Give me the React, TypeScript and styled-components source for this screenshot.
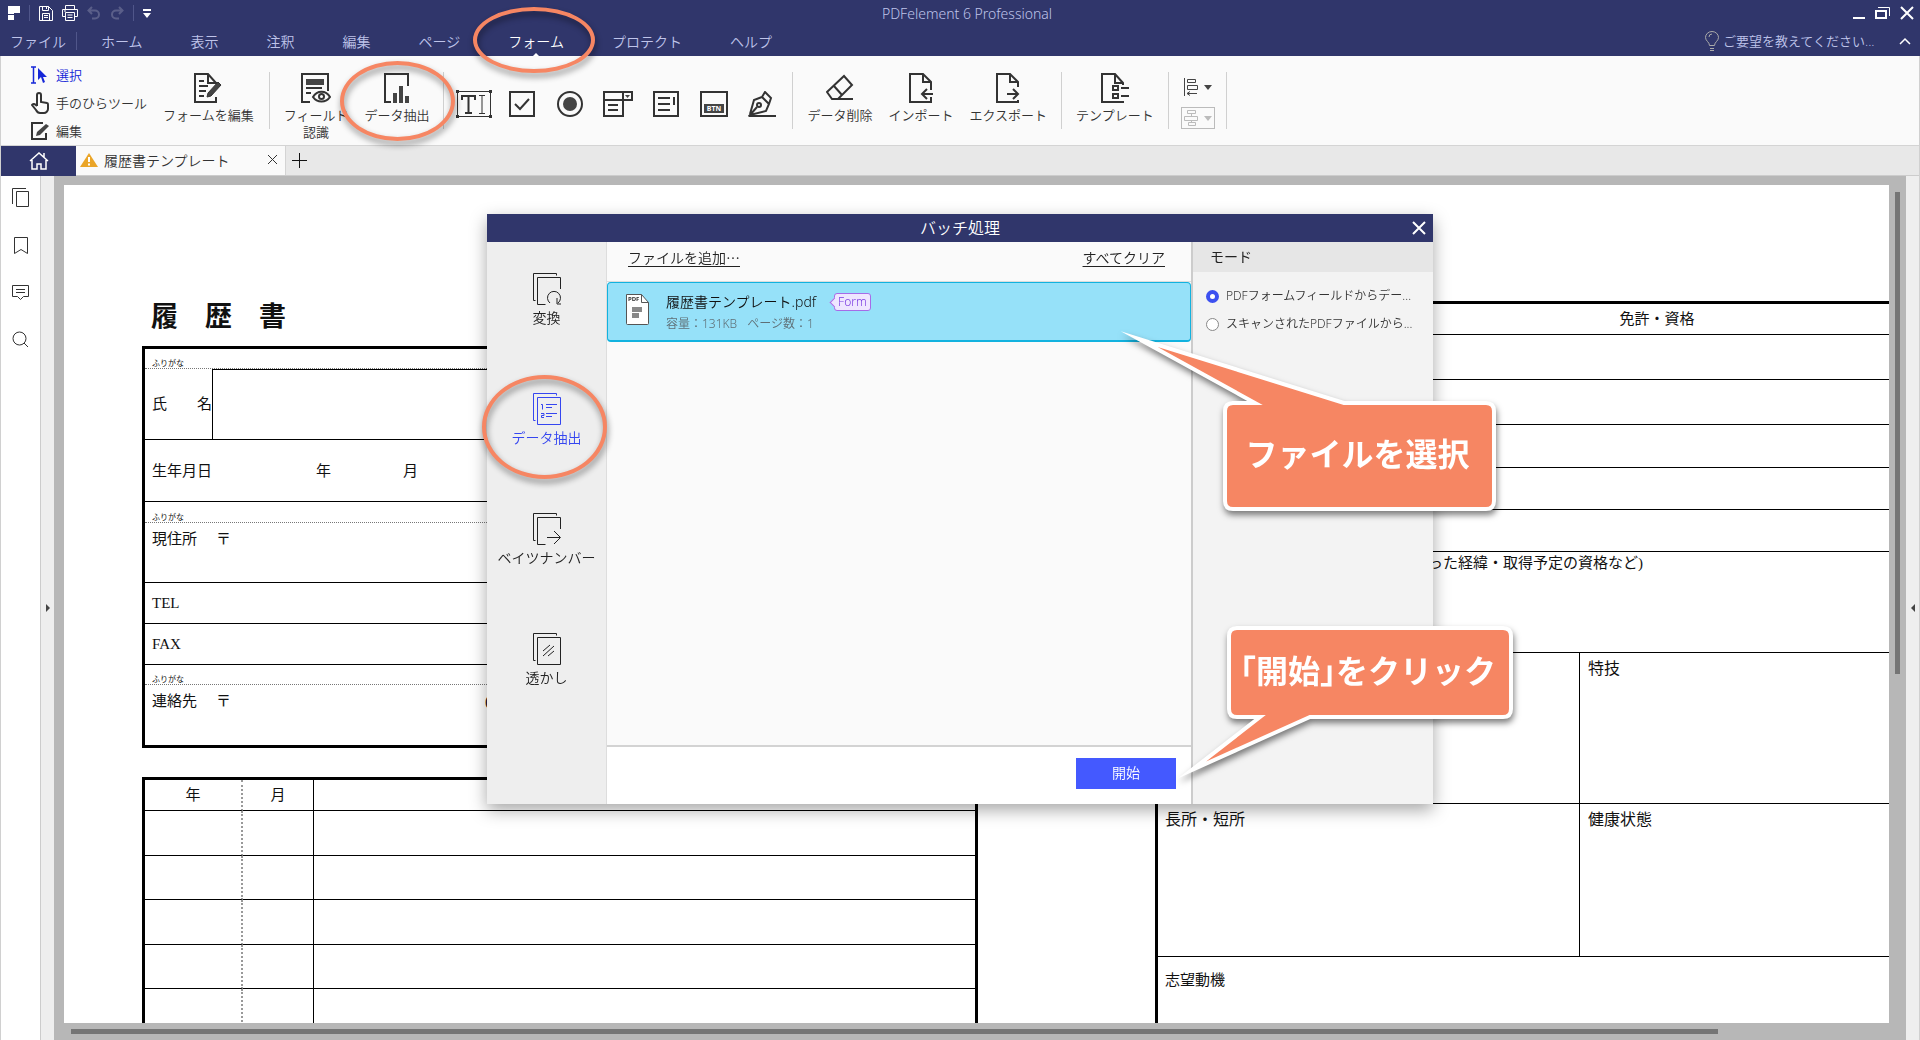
import React from "react";
import styled, { createGlobalStyle, css } from "styled-components";

const navy = "#30366b";
const orange = "#f68663";
const uiFont = `"Noto Sans", "Noto Sans CJK JP", sans-serif`;
const cjkFont = `"Noto Sans CJK JP", sans-serif`;
const paperFont = `"Liberation Serif", "Noto Sans CJK JP", serif`;

const GlobalStyle = createGlobalStyle`
  * { box-sizing: border-box; }
  body { margin: 0; font-family: ${uiFont}; font-weight: 350; color: #333; overflow: hidden; }
  button, input { font: inherit; color: inherit; background: none; border: 0; padding: 0; margin: 0; }
  button { cursor: pointer; }
  svg { display: block; flex: none; }
`;

const Window = styled.div`
  display: flex;
  flex-direction: column;
  height: 100vh;
  border: solid #d0d0d0;
  border-width: 0 1px;
`;

/* ---------- header ---------- */
const Header = styled.header`
  background: ${navy};
  color: #bfc4ea;
  margin: 0 -1px;
`;
const TitleBar = styled.div`
  display: grid;
  grid-template-columns: 1fr auto 1fr;
  align-items: center;
  height: 26px;
  padding: 0 6px 0 8px;
  font-size: 14px;
`;
const AppTitle = styled.span`
  padding-left: 12px;
`;
const QuickAccess = styled.div`
  display: flex;
  align-items: center;
  gap: 9px;
  color: #fff;
`;
const Rule = styled.span<{ $h: number }>`
  width: 1px;
  height: ${(p) => p.$h}px;
  background: #50568a;
`;
const WindowControls = styled.div`
  display: flex;
  justify-content: flex-end;
  align-items: center;
  gap: 10px;
  color: #fff;
`;
const IconButton = styled.button<{ $faded?: boolean }>`
  display: flex;
  align-items: center;
  justify-content: center;
  opacity: ${(p) => (p.$faded ? 0.2 : 1)};
`;
const MenuBar = styled.nav`
  display: flex;
  align-items: center;
  height: 30px;
  padding: 0 9px 0 10px;
  font-size: 14px;
`;
const FileItem = styled.button`
  padding-right: 10px;
`;
const MenuItem = styled.button<{ $active?: boolean }>`
  position: relative;
  height: 30px;
  padding: 0 24px;
  color: ${(p) => (p.$active ? "#fff" : "inherit")};
  ${(p) =>
    p.$active &&
    css`
      &::after {
        content: "";
        position: absolute;
        bottom: 0;
        left: 50%;
        margin-left: -3px;
        border: 3px solid transparent;
        border-top: 0;
        border-bottom-color: #fff;
      }
    `}
`;
const Feedback = styled.label`
  display: flex;
  align-items: center;
  gap: 4px;
  margin-left: auto;
  font-size: 13px;
  input {
    width: 176px;
  }
  input::placeholder {
    color: #bfc4ea;
    opacity: 1;
  }
`;

const Ring = styled.span<{ $t: number; $r: number; $b: number; $l: number }>`
  position: absolute;
  z-index: 3;
  top: ${(p) => -p.$t}px;
  right: ${(p) => -p.$r}px;
  bottom: ${(p) => -p.$b}px;
  left: ${(p) => -p.$l}px;
  border: 4px solid ${orange};
  border-radius: 50%;
  filter: drop-shadow(1px 4px 3px rgba(0, 0, 0, 0.45));
  pointer-events: none;
`;

/* ---------- ribbon ---------- */
const Ribbon = styled.div`
  display: flex;
  align-items: flex-start;
  height: 90px;
  background: #fafafa;
  border-bottom: 1px solid #d4d4d4;
  font-size: 13px;
`;
const RibbonRule = styled.span`
  width: 1px;
  height: 57px;
  margin-top: 16px;
  background: #d0d0d0;
`;
const ModeList = styled.div`
  display: flex;
  flex-direction: column;
  padding: 5px 8px 0 30px;
`;
const ModeButton = styled.button<{ $active?: boolean }>`
  display: flex;
  align-items: center;
  gap: 7px;
  height: 28px;
  line-height: 17px;
  color: ${(p) => (p.$active ? "#1526d8" : "inherit")};
`;
const Group = styled.div`
  display: flex;
  padding: 0 6px;
`;
const EditGroup = styled.div`
  padding-right: 7px;
`;
const ToolButton = styled.button`
  position: relative;
  display: flex;
  flex-direction: column;
  align-items: center;
  gap: 4px;
  padding: 17px 8px 0;
  line-height: 17px;
`;
const FieldButton = styled.button`
  display: flex;
  align-items: center;
  justify-content: center;
  width: 48px;
  padding-top: 34px;
`;
const AlignColumn = styled.div`
  display: flex;
  flex-direction: column;
  gap: 9px;
  padding: 20px 11px 0 12px;
`;
const AlignButton = styled.button<{ $framed?: boolean }>`
  display: flex;
  align-items: center;
  justify-content: space-between;
  width: 34px;
  height: 22px;
  padding: 0 2px;
  border: 1px solid ${(p) => (p.$framed ? "#bbb" : "transparent")};
  color: ${(p) => (p.$framed ? "#bbb" : "#444")};
`;

/* ---------- tabs ---------- */
const TabBar = styled.div`
  display: flex;
  height: 30px;
  background: #e8e8e8;
  border-bottom: 1px solid #ccc;
  font-size: 14px;
`;
const HomeTab = styled.button`
  display: flex;
  align-items: center;
  justify-content: center;
  width: 75px;
  height: 30px;
  background: ${navy};
`;
const DocTab = styled.div`
  display: flex;
  align-items: center;
  gap: 6px;
  width: 210px;
  padding: 0 7px 2px 4px;
  background: #fafafa;
  border-right: 1px solid #d4d4d4;
  span {
    flex: 1;
  }
`;
const AddTab = styled.button`
  padding: 0 6px;
`;

/* ---------- work area ---------- */
const Workspace = styled.div`
  display: flex;
  flex: 1;
  min-height: 0;
`;
const SideRail = styled.nav`
  display: flex;
  flex-direction: column;
  align-items: center;
  gap: 29px;
  width: 40px;
  padding-top: 12px;
  background: #fff;
  border-right: 1px solid #ccc;
`;
const Gutter = styled.div`
  display: flex;
  align-items: center;
  justify-content: center;
  width: 13px;
  background: #eee;
`;
const Canvas = styled.div`
  display: grid;
  grid-template: minmax(0, 1fr) 17px / minmax(0, 1fr) 17px;
  flex: 1;
  min-width: 0;
  padding: 9px 0 0 10px;
  background: #b7b7b7;
`;
const VTrack = styled.div`
  padding: 7px 6px 0;
`;
const VThumb = styled.div`
  width: 5px;
  height: 58%;
  background: #757575;
`;
const HTrack = styled.div`
  padding: 6px 0 0 7px;
`;
const HThumb = styled.div`
  width: 90.6%;
  height: 5px;
  background: #757575;
`;

/* ---------- résumé paper ---------- */
const Paper = styled.div`
  display: flex;
  align-items: flex-start;
  gap: 177px;
  overflow: hidden;
  padding-left: 78px;
  background: #fff;
  color: #111;
  font-family: ${paperFont};
  font-size: 15px;
  font-weight: 400;
  line-height: 18px;
`;
const LeftSheet = styled.div`
  flex: none;
  width: 836px;
  padding-top: 112px;
`;
const RightSheet = styled.div`
  flex: none;
  width: 836px;
  padding-top: 116px;
`;
const PaperTitle = styled.h1`
  margin: 0 0 9px 9px;
  font-size: 27px;
  line-height: 40px;
  font-weight: 700;
`;
const Frame = styled.div`
  border: 3px solid #000;
`;
const FormRow = styled.div<{ $h: number; $dotted?: boolean; $top?: boolean }>`
  display: flex;
  align-items: ${(p) => (p.$top ? "flex-start" : "center")};
  height: ${(p) => p.$h}px;
  padding: ${(p) => (p.$top ? "7px" : "0")} 0 0 7px;
  border-bottom: 1px ${(p) => (p.$dotted ? "dotted #777" : "solid #000")};
  &:last-child {
    border-bottom: 0;
  }
`;
const Ruby = styled.span`
  align-self: flex-end;
  font-size: 8px;
  line-height: 9px;
`;
const NameLabel = styled.span`
  display: flex;
  justify-content: space-between;
  width: 60px;
`;
const NameBox = styled.span`
  flex: 1;
  align-self: stretch;
  border: solid #000;
  border-width: 1px 0 0 1px;
`;
const Slot = styled.span<{ $w: number }>`
  width: ${(p) => p.$w}px;
`;
const HistoryTable = styled.table`
  width: 100%;
  margin-top: 29px;
  border-collapse: separate;
  border-spacing: 0;
  border: 3px solid #000;
  table-layout: fixed;
  th,
  td {
    height: 44px;
    padding: 0;
    font-weight: 400;
    border-bottom: 1px solid #000;
  }
  tr:nth-child(odd) td {
    height: 45px;
  }
  th {
    height: 31px;
  }
  th:first-child,
  td:first-child {
    width: 98px;
    border-right: 2px dotted #999;
  }
  th:nth-child(2),
  td:nth-child(2) {
    width: 71px;
    border-right: 1px solid #000;
  }
`;
const LicenseTable = styled.table`
  width: 100%;
  border-collapse: separate;
  border-spacing: 0;
  th,
  td {
    padding: 0;
    font-weight: 400;
    border-bottom: 1px solid #000;
  }
  th {
    height: 31px;
    padding-left: 168px;
  }
`;
const LicenseCell = styled.td<{ $h: number }>`
  height: ${(p) => p.$h}px;
`;
const Note = styled.p`
  height: 101px;
  margin: 0;
  padding: 2px 0 0 270px;
  border-bottom: 1px solid #000;
`;
const BoxRow = styled.div<{ $h: number }>`
  display: grid;
  grid-template-columns: 421px 1fr;
  height: ${(p) => p.$h}px;
  border-bottom: 1px solid #000;
  font-size: 16px;
`;
const Box = styled.div`
  padding: 7px 0 0 7px;
  & + & {
    padding-left: 8px;
    border-left: 1px solid #000;
  }
`;
const Motive = styled.div`
  height: 160px;
  padding: 14px 0 0 7px;
`;

/* ---------- batch dialog ---------- */
const Overlay = styled.div`
  position: fixed;
  inset: 0;
  display: flex;
  align-items: flex-start;
  justify-content: center;
  padding-top: 214px;
  z-index: 5;
`;
const Dialog = styled.section`
  position: relative;
  display: grid;
  grid-template: 28px 562px / 120px minmax(0, 1fr) 242px;
  width: 946px;
  font-size: 14px;
  line-height: 20px;
  background: #fafafa;
  box-shadow: 0 6px 16px rgba(0, 0, 0, 0.35);
`;
const DialogTitle = styled.header`
  grid-column: 1 / -1;
  display: grid;
  grid-template-columns: 1fr auto 1fr;
  align-items: center;
  padding: 0 7px;
  background: ${navy};
  color: #fff;
  h2 {
    grid-column: 2;
    margin: 0;
    font-size: 16px;
    font-weight: 350;
  }
  button {
    justify-self: end;
  }
`;
const DialogNav = styled.nav`
  display: flex;
  flex-direction: column;
  background: #eee;
  border-right: 1px solid #ddd;
`;
const NavButton = styled.button<{ $active?: boolean }>`
  position: relative;
  display: flex;
  flex-direction: column;
  align-items: center;
  gap: 3px;
  height: 120px;
  padding-top: 30px;
  color: ${(p) => (p.$active ? "#3546f0" : "#222")};
`;
const Files = styled.div`
  display: flex;
  flex-direction: column;
`;
const FileActions = styled.div`
  display: flex;
  justify-content: space-between;
  height: 40px;
  padding: 5px 26px 0 21px;
  border-bottom: 1px solid #ddd;
`;
const LinkButton = styled.button`
  height: 20px;
  font-family: ${cjkFont};
  color: #222;
  text-decoration: underline;
  text-underline-offset: 3px;
`;
const FileRow = styled.div`
  display: flex;
  align-items: flex-start;
  gap: 17px;
  height: 60px;
  padding: 9px 17px 0;
  background: #96e1f9;
  border: 1px solid #12b2df;
  border-bottom-width: 2px;
  border-radius: 4px;
  svg {
    margin-top: 2px;
  }
`;
const FileName = styled.div`
  display: flex;
  align-items: center;
  gap: 14px;
  height: 19px;
  color: #111;
`;
const FileMeta = styled.div`
  display: flex;
  gap: 10px;
  margin-top: 4px;
  font-size: 12px;
  line-height: 18px;
  color: #5f6f76;
`;
const FormBadge = styled.span`
  position: relative;
  margin-left: 4px;
  padding: 0 3px;
  border: 1px solid #a66be8;
  border-radius: 3px;
  background: #efe6ff;
  color: #7a3be0;
  font-size: 12px;
  line-height: 16px;
  &::before {
    content: "";
    position: absolute;
    left: -4px;
    top: 5px;
    width: 6px;
    height: 6px;
    background: #efe6ff;
    border: solid #a66be8;
    border-width: 0 0 1px 1px;
    transform: rotate(45deg);
  }
`;
const DialogFooter = styled.footer`
  display: flex;
  justify-content: flex-end;
  margin-top: auto;
  height: 59px;
  padding: 11px 15px 0;
  background: #fff;
  border-top: 2px solid #d3d3d3;
`;
const StartButton = styled.button`
  width: 100px;
  height: 31px;
  padding-bottom: 2px;
  background: #4459ff;
  color: #fff;
`;
const ModePanel = styled.fieldset`
  min-width: 0;
  margin: 0;
  padding: 0;
  border: 0;
  border-left: 2px solid #ccc;
  background: #f3f3f3;
`;
const ModeTitle = styled.div`
  height: 30px;
  padding: 5px 17px 0;
  margin-bottom: 10px;
  background: #e6e6e6;
  color: #222;
  font-weight: 400;
`;
const ModeOption = styled.label`
  display: flex;
  align-items: center;
  gap: 7px;
  height: 28px;
  padding-left: 13px;
  font-size: 12px;
  white-space: nowrap;
  input {
    appearance: none;
    width: 13px;
    height: 13px;
    border: 1px solid #888;
    border-radius: 50%;
    background: #fff;
  }
  input:checked {
    border: 4px solid #3c50f0;
  }
`;
const CalloutBox = styled.div<{ $x: number; $y: number; $w: number; $h: number }>`
  position: absolute;
  left: ${(p) => p.$x}px;
  top: ${(p) => p.$y}px;
  width: ${(p) => p.$w}px;
  height: ${(p) => p.$h}px;
  display: flex;
  align-items: center;
  justify-content: center;
  padding: 0 4px 8px 0;
  svg {
    position: absolute;
    inset: 0;
    overflow: visible;
    filter: drop-shadow(1px 4px 3px rgba(0, 0, 0, 0.5));
  }
  strong {
    position: relative;
    color: #fff;
    font-family: ${cjkFont};
    font-size: 32px;
    font-weight: 700;
    white-space: nowrap;
    font-feature-settings: "halt" 1;
  }
`;

/* ---------- icons ---------- */
type IconProps = { w: number; h: number; s?: number; children: React.ReactNode };
const Icon = ({ w, h, s = 1, children }: IconProps) => (
  <svg width={w} height={h} viewBox={`0 0 ${w} ${h}`} fill="none" stroke="currentColor" strokeWidth={s} aria-hidden="true">
    {children}
  </svg>
);

const LogoIcon = () => (
  <Icon w={12} h={14} s={0}>
    <path fill="#fff" d="M0 0h12v7H6v1H0zM0 9h6v5H0z" />
  </Icon>
);
const SaveIcon = () => (
  <Icon w={14} h={15}>
    <path d="M.5.5h9l4 4v10H.5zM3.500.5v4h6v-4M3.500 14.500v-7h7v7M7.500 1v2M5 9.500h4M5 11.500h4" />
  </Icon>
);
const PrintIcon = () => (
  <Icon w={16} h={16}>
    <path d="M3.500 4V.5h9V4M3.500 11.500h-3v-7h15v7h-3M3.500 7.500h9v8h-9zM5.500 10h5M5.500 12.500h5M2 6h2" />
  </Icon>
);
const UndoIcon = () => (
  <Icon w={14} h={14} s={2}>
    <path d="M5 1 1.500 4.500 5 8M2 4.500h6a4 4 0 0 1 0 8H5" />
  </Icon>
);
const RedoIcon = () => (
  <Icon w={14} h={14} s={2}>
    <path d="m9 1 3.500 3.500L9 8M12 4.500H6a4 4 0 0 0 0 8h3" />
  </Icon>
);
const EditFormIcon = () => (
  <Icon w={28} h={30} s={2}>
    <path d="M22 9v2M22 24v5H1V1h13l8 9M14 1v9h8M5 8h5M5 13h9M5 18h7M5 23h5" />
    <path d="m13 24 1-4L24 9l3 3-10 11z" fill="#444" strokeWidth="1" />
  </Icon>
);
const FieldIcon = () => (
  <Icon w={30} h={30} s={2}>
    <path d="M9 29H1V1h26v17M5 15h16M5 20h5" />
    <path d="M5 6h18v6H5z" fill="#444" stroke="none" />
    <path d="M12 24c4-7 13-7 17 0-4 6-13 6-17 0z" />
    <circle cx="20.500" cy="23.500" r="2.500" />
  </Icon>
);
const ExtractIcon = () => (
  <Icon w={26} h={30} s={2}>
    <path d="M7 29H1V1h23v12" />
    <path d="M9 20h4v10H9zM15 13h4v17h-4zM21 23h4v7h-4z" fill="#444" stroke="none" />
  </Icon>
);
const EraserIcon = () => (
  <Icon w={28} h={30} s={2}>
    <path d="M1 19 18 3l8 9-14 14H6zM8 13l8 9M8 26h19" />
  </Icon>
);
const ImportIcon = () => (
  <Icon w={24} h={30} s={2}>
    <path d="M22 17V9l-8-8H1v28h21v-5M14 1v8h8M24 21H14M18 16l-5 5 5 5" />
  </Icon>
);
const ExportIcon = () => (
  <Icon w={24} h={30} s={2}>
    <path d="M22 14V9l-8-8H1v28h21v-2M14 1v8h8M11 21h10M17 16l5 5-5 5" />
  </Icon>
);
const TemplateIcon = () => (
  <Icon w={28} h={30} s={2}>
    <path d="M22 12V10l-8-9H1v28h22M14 1v9h8M12 13h5v4h-5zM12 21h5v4h-5zM20 15h8M20 23h8" />
  </Icon>
);
const TextFieldIcon = () => (
  <Icon w={36} h={28}>
    <path d="M3 1.500h30M3 26.500h30M1.500 3v22M34.500 3v22" />
    <path d="M0 0h3v3H0zM33 0h3v3h-3zM0 25h3v3H0zM33 25h3v3h-3z" fill="#333" stroke="none" />
    <path d="M6 10V6h13v4M12.500 6v17M9 23h7" strokeWidth="2" />
    <path d="M23 5.500h6M23 23.500h6M26 6v17" />
  </Icon>
);
const CheckIcon = () => (
  <Icon w={26} h={26} s={2}>
    <path d="M1 1h24v24H1zM6 13l5 5 9-10" />
  </Icon>
);
const RadioIcon = () => (
  <Icon w={26} h={26} s={2}>
    <circle cx="13" cy="13" r="12" />
    <circle cx="13" cy="13" r="7" fill="#444" stroke="none" />
  </Icon>
);
const ComboIcon = () => (
  <Icon w={30} h={26} s={2}>
    <path d="M20 9v16H1V1h28v8H1M20 1v8M5 14h10M5 19h10" />
    <path d="M22 4h5l-2.500 3z" fill="#444" stroke="none" />
  </Icon>
);
const ListIcon = () => (
  <Icon w={26} h={26} s={2}>
    <path d="M1 1h24v24H1zM5 7h12M5 13h12M5 19h12M21 6v8" />
  </Icon>
);
const BtnIcon = () => (
  <Icon w={28} h={26} s={2}>
    <path d="M1 1h26v24H1z" />
    <path d="M4 13h20v9H4z" fill="#444" stroke="none" />
    <text x="14" y="20" textAnchor="middle" fontSize="7" fontWeight="700" fill="#fff" stroke="none">BTN</text>
  </Icon>
);
const PenIcon = () => (
  <Icon w={28} h={26} s={2}>
    <path d="M1 25h27M2 23 6 9l8-3 7 7-3 7-16 4 7-8M14 6l3-5 6 6-2 6" />
    <circle cx="11" cy="14" r="2" />
  </Icon>
);
const SelectIcon = () => (
  <Icon w={18} h={18} s={1.5}>
    <path d="M0 1h5M0 17h5M2.500 1v16" />
    <path d="M7 2v12l3-3 2 6 2-1-2-5h4z" fill="currentColor" stroke="none" />
  </Icon>
);
const HandIcon = () => (
  <Icon w={18} h={22} s={2}>
    <path d="M6 14V3a2 2 0 0 1 4 0v7l6 1c1 0 1 1 1 2v4c0 2-2 4-4 4H9c-2 0-3-1-4-3l-4-5c1-2 3-1 5 1" />
  </Icon>
);
const PencilBoxIcon = () => (
  <Icon w={18} h={18} s={2}>
    <path d="M12 1H1v16h14v-6" />
    <path d="m5 14 1-4 9-8 3 2-9 9z" fill="#444" stroke="none" />
  </Icon>
);
const Caret = () => (
  <Icon w={8} h={5} s={0}>
    <path d="M0 0h8L4 5z" fill="currentColor" />
  </Icon>
);
const AlignLeftIcon = () => (
  <Icon w={16} h={18}>
    <path d="M.5 0v18M3.500 1.500h8v3h-8zM3.500 7.500h10v4h-10zM3 15.500h10M6 13.500l-3 2 3 2" />
  </Icon>
);
const DistributeIcon = () => (
  <Icon w={16} h={18}>
    <path d="M3.500 1.500h8v3h-8zM.5 7.500h13v4H.5zM4.500 13.500h7v3h-7zM7.500 4v3M7.500 11v2" />
  </Icon>
);
const CrossIcon = ({ size, s = 1 }: { size: number; s?: number }) => (
  <Icon w={size} h={size} s={s}>
    <path d={`M1 1 ${size - 1} ${size - 1}M${size - 1} 1 1 ${size - 1}`} />
  </Icon>
);
const HomeIcon = () => (
  <Icon w={20} h={18} s={1.5}>
    <path stroke="#fff" d="m1 9 9-8 9 8M3 8v9h5v-5h4v5h5V8M15 1v4" />
  </Icon>
);
const WarnIcon = () => (
  <Icon w={18} h={14} s={0}>
    <path d="M9 0l9 14H0z" fill="#eaa528" />
    <path d="M8 4h2v5H8zM8 10.500h2v2H8z" fill="#fff" />
  </Icon>
);
const PagesIcon = () => (
  <Icon w={18} h={20}>
    <path d="M.5 16V.5H14M4.500 3.500h12v15h-12z" />
  </Icon>
);
const BookmarkIcon = () => (
  <Icon w={16} h={18}>
    <path d="M1.500.5h13v16L8 12.500l-6.500 4z" />
  </Icon>
);
const CommentIcon = () => (
  <Icon w={18} h={18}>
    <path d="M.5 1.500h16v11h-5l-3 3-3-3h-5zM4 5.500h9M4 8.500h9" />
  </Icon>
);
const SearchIcon = () => (
  <Icon w={18} h={18}>
    <circle cx="7.500" cy="7.500" r="6.500" />
    <path d="m12 12 4 4" />
  </Icon>
);
const Sheets = ({ children, open }: { children: React.ReactNode; open?: boolean }) => (
  <Icon w={28} h={33}>
    <path d="M2.500 28.500h-2v-27h23v2" />
    <path d={open ? "M27.500 17V5.500h-23v27h8" : "M4.500 5.500h23v27h-23z"} />
    {children}
  </Icon>
);
const PdfIcon = () => (
  <Icon w={24} h={31}>
    <path d="M1.500.5h15l7 8v21a1 1 0 0 1-1 1h-20a1 1 0 0 1-1-1z" fill="#fff" stroke="#555" />
    <path d="M16.500.5v8h7" stroke="#555" />
    <path d="M7 13h10v5H7zM7 19h7v5H7z" fill="#888" stroke="none" />
    <text x="3" y="7" fontSize="6" fontWeight="700" fill="#333" stroke="none">PDF</text>
  </Icon>
);

const Callout = (p: { x: number; y: number; w: number; h: number; path: string; children: React.ReactNode }) => (
  <CalloutBox $x={p.x} $y={p.y} $w={p.w} $h={p.h}>
    <svg width={p.w} height={p.h} aria-hidden="true">
      <path d={p.path} fill={orange} stroke="#fff" strokeWidth="4" strokeMiterlimit="20" />
    </svg>
    <strong>{p.children}</strong>
  </CalloutBox>
);

const menu = ["ホーム", "表示", "注釈", "編集", "ページ", "フォーム", "プロテクト", "ヘルプ"];
const fieldTools: [string, React.ReactNode][] = [
  ["text", <TextFieldIcon />],
  ["check", <CheckIcon />],
  ["radio", <RadioIcon />],
  ["combo", <ComboIcon />],
  ["list", <ListIcon />],
  ["button", <BtnIcon />],
  ["sign", <PenIcon />],
];

const Resume = () => (
  <Paper>
    <LeftSheet>
      <PaperTitle>履　歴　書</PaperTitle>
      <Frame>
        <FormRow $h={20} $dotted><Ruby>ふりがな</Ruby></FormRow>
        <FormRow $h={71}>
          <NameLabel><span>氏</span><span>名</span></NameLabel>
          <NameBox />
        </FormRow>
        <FormRow $h={62}>
          <Slot $w={164}>生年月日</Slot>
          <Slot $w={87}>年</Slot>
          <Slot $w={87}>月</Slot>
        </FormRow>
        <FormRow $h={21} $dotted><Ruby>ふりがな</Ruby></FormRow>
        <FormRow $h={60} $top><Slot $w={64}>現住所</Slot>〒</FormRow>
        <FormRow $h={41}>TEL</FormRow>
        <FormRow $h={41}>FAX</FormRow>
        <FormRow $h={20} $dotted><Ruby>ふりがな</Ruby></FormRow>
        <FormRow $h={60} $top><Slot $w={64}>連絡先</Slot><Slot $w={269}>〒</Slot>(</FormRow>
      </Frame>
      <HistoryTable>
        <thead>
          <tr><th>年</th><th>月</th><th /></tr>
        </thead>
        <tbody>
          {[0, 1, 2, 3, 4, 5].map((i) => (
            <tr key={i}><td /><td /><td /></tr>
          ))}
        </tbody>
      </HistoryTable>
    </LeftSheet>
    <RightSheet>
      <Frame>
        <LicenseTable>
          <thead><tr><th>免許・資格</th></tr></thead>
          <tbody>
            {[45, 45, 43, 42, 42].map((h, i) => (
              <tr key={i}><LicenseCell $h={h} /></tr>
            ))}
          </tbody>
        </LicenseTable>
        <Note>った経緯・取得予定の資格など)</Note>
        <BoxRow $h={151}><Box /><Box>特技</Box></BoxRow>
        <BoxRow $h={153}><Box>長所・短所</Box><Box>健康状態</Box></BoxRow>
        <Motive>志望動機</Motive>
      </Frame>
    </RightSheet>
  </Paper>
);

const BatchDialog = () => (
  <Overlay>
    <Dialog role="dialog" aria-labelledby="batch-title">
      <DialogTitle>
        <h2 id="batch-title">バッチ処理</h2>
        <IconButton aria-label="閉じる"><CrossIcon size={14} s={2} /></IconButton>
      </DialogTitle>
      <DialogNav>
        <NavButton>
          <Sheets open><path d="M17 31a6.500 6.500 0 1 1 8 0M24 26v6h4" /></Sheets>
          変換
        </NavButton>
        <NavButton $active>
          <Sheets><path d="M8 12.500h1.500v5M13 12.500h11M13 15.500h6M8 21.500h3v2H8.500v2H11M13 21.500h11M13 24.500h6" /></Sheets>
          データ抽出
          <Ring $t={-13} $r={1} $b={-3} $l={5} />
        </NavButton>
        <NavButton>
          <Sheets open><path d="M14 25.500h13M21 19l6.500 6.500L21 32" /></Sheets>
          ベイツナンバー
        </NavButton>
        <NavButton>
          <Sheets><path d="m10 19 7-6M10 24l11-10M15 24l6-5" /></Sheets>
          透かし
        </NavButton>
      </DialogNav>
      <Files>
        <FileActions>
          <LinkButton>ファイルを追加…</LinkButton>
          <LinkButton>すべてクリア</LinkButton>
        </FileActions>
        <FileRow>
          <PdfIcon />
          <div>
            <FileName>履歴書テンプレート.pdf <FormBadge>Form</FormBadge></FileName>
            <FileMeta><span>容量：131KB</span><span>ページ数：1</span></FileMeta>
          </div>
        </FileRow>
        <DialogFooter><StartButton>開始</StartButton></DialogFooter>
      </Files>
      <ModePanel aria-label="モード">
        <ModeTitle>モード</ModeTitle>
        <ModeOption><input type="radio" name="mode" defaultChecked />PDFフォームフィールドからデー...</ModeOption>
        <ModeOption><input type="radio" name="mode" />スキャンされたPDFファイルから...</ModeOption>
      </ModePanel>
      <Callout x={736} y={187} w={273} h={110}
        path="M10 2H32L-84 -62L121 2H263Q271 2 271 10V100Q271 108 263 108H10Q2 108 2 100V10Q2 2 10 2Z">
        ファイルを選択
      </Callout>
      <Callout x={740} y={412} w={286} h={93}
        path="M10 2H276Q284 2 284 10V83Q284 91 276 91H83L-35 144L33 91H10Q2 91 2 83V10Q2 2 10 2Z">
        「開始」をクリック
      </Callout>
    </Dialog>
  </Overlay>
);

export default function App() {
  return (
    <Window>
      <GlobalStyle />
      <Header>
        <TitleBar>
          <QuickAccess>
            <LogoIcon />
            <Rule $h={16} />
            <IconButton aria-label="保存"><SaveIcon /></IconButton>
            <IconButton aria-label="印刷"><PrintIcon /></IconButton>
            <IconButton aria-label="元に戻す" $faded><UndoIcon /></IconButton>
            <IconButton aria-label="やり直し" $faded><RedoIcon /></IconButton>
            <Rule $h={16} />
            <IconButton aria-label="カスタマイズ">
              <Icon w={8} h={9} s={0}><path fill="#fff" d="M0 0h8v2H0zM0 4h8L4 9z" /></Icon>
            </IconButton>
          </QuickAccess>
          <AppTitle>PDFelement 6 Professional</AppTitle>
          <WindowControls>
            <IconButton aria-label="最小化"><Icon w={12} h={12} s={2}><path d="M0 11h12" /></Icon></IconButton>
            <IconButton aria-label="元のサイズ"><Icon w={15} h={12} s={2}><path d="M1 4h10v7H1z" /><path d="M3 .5h11.500V9" strokeWidth="1" /></Icon></IconButton>
            <IconButton aria-label="終了"><CrossIcon size={14} s={2} /></IconButton>
          </WindowControls>
        </TitleBar>
        <MenuBar>
          <FileItem>ファイル</FileItem>
          <Rule $h={18} />
          {menu.map((m) => (
            <MenuItem key={m} $active={m === "フォーム"}>
              {m}
              {m === "フォーム" && <Ring $t={19} $r={7} $b={17} $l={11} />}
            </MenuItem>
          ))}
          <Feedback>
            <Icon w={14} h={20}>
              <path stroke="#aaa" d="M4.500 14.500C4.500 11 .5 10 .5 6.500a6.500 6 0 0 1 13 0c0 3.500-4 4.500-4 8zM5 17.500h4M5 19.500h4M4 6a3 3 0 0 1 3-3" />
            </Icon>
            <input aria-label="ご要望" placeholder="ご要望を教えてください..." />
          </Feedback>
          <IconButton aria-label="リボンを閉じる"><Icon w={12} h={8} s={1.5}><path stroke="#fff" d="m1 7 5-5 5 5" /></Icon></IconButton>
        </MenuBar>
      </Header>

      <Ribbon>
        <ModeList>
          <ModeButton $active><SelectIcon />選択</ModeButton>
          <ModeButton><HandIcon />手のひらツール</ModeButton>
          <ModeButton><PencilBoxIcon />編集</ModeButton>
        </ModeList>
        <EditGroup>
          <ToolButton><EditFormIcon />フォームを編集</ToolButton>
        </EditGroup>
        <RibbonRule />
        <Group>
          <ToolButton><FieldIcon /><span>フィールド<br />認識</span></ToolButton>
          <ToolButton><ExtractIcon />データ抽出<Ring $t={-5} $r={18} $b={0} $l={16} /></ToolButton>
        </Group>
        <RibbonRule />
        <Group>
          {fieldTools.map(([name, icon]) => (
            <FieldButton key={name} aria-label={name}>{icon}</FieldButton>
          ))}
        </Group>
        <RibbonRule />
        <Group>
          <ToolButton><EraserIcon />データ削除</ToolButton>
          <ToolButton><ImportIcon />インポート</ToolButton>
          <ToolButton><ExportIcon />エクスポート</ToolButton>
        </Group>
        <RibbonRule />
        <Group>
          <ToolButton><TemplateIcon />テンプレート</ToolButton>
        </Group>
        <RibbonRule />
        <AlignColumn>
          <AlignButton aria-label="整列"><AlignLeftIcon /><Caret /></AlignButton>
          <AlignButton aria-label="分布" $framed><DistributeIcon /><Caret /></AlignButton>
        </AlignColumn>
        <RibbonRule />
      </Ribbon>

      <TabBar>
        <HomeTab aria-label="ホーム画面"><HomeIcon /></HomeTab>
        <DocTab>
          <WarnIcon />
          <span>履歴書テンプレート</span>
          <IconButton aria-label="タブを閉じる"><CrossIcon size={11} /></IconButton>
        </DocTab>
        <AddTab aria-label="新しいタブ">
          <Icon w={15} h={15}><path stroke="#111" d="M7.500 0v15M0 7.500h15" /></Icon>
        </AddTab>
      </TabBar>

      <Workspace>
        <SideRail>
          <IconButton aria-label="ページ一覧"><PagesIcon /></IconButton>
          <IconButton aria-label="しおり"><BookmarkIcon /></IconButton>
          <IconButton aria-label="コメント"><CommentIcon /></IconButton>
          <IconButton aria-label="検索"><SearchIcon /></IconButton>
        </SideRail>
        <Gutter><Icon w={4} h={8} s={0}><path d="M0 0v8l4-4z" fill="#444" /></Icon></Gutter>
        <Canvas>
          <Resume />
          <VTrack><VThumb /></VTrack>
          <HTrack><HThumb /></HTrack>
        </Canvas>
        <Gutter><Icon w={4} h={8} s={0}><path d="M4 0v8L0 4z" fill="#444" /></Icon></Gutter>
      </Workspace>
      <BatchDialog />
    </Window>
  );
}
